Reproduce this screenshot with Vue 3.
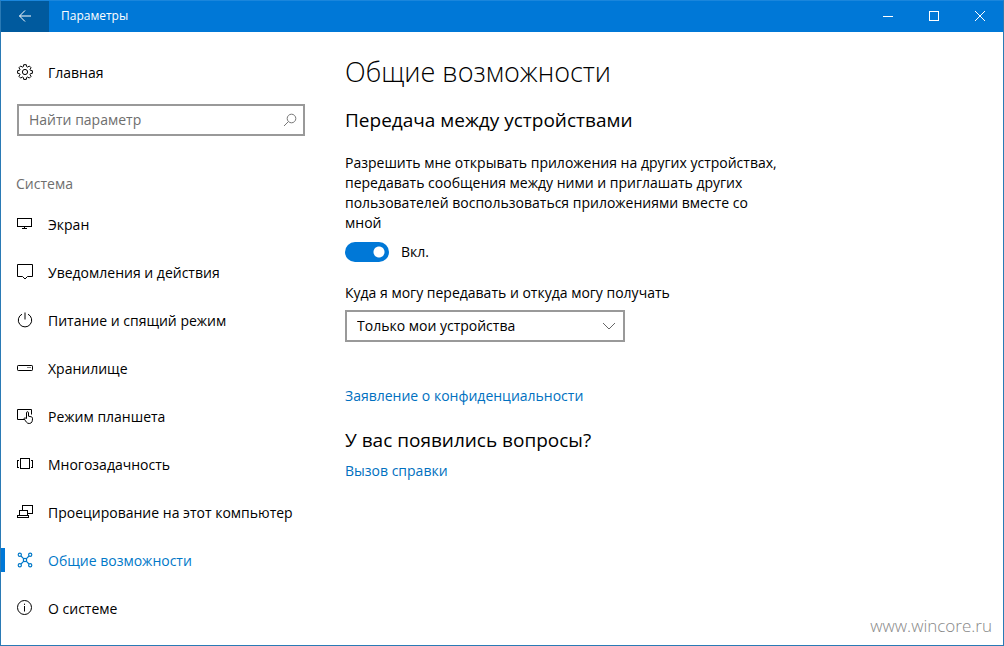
<script setup>
import { ref } from 'vue'

const query = ref('')
const shared = ref(true)
const source = ref('mine')
const active = ref('shared')

const items = [
  { id: 'display', label: 'Экран' },
  { id: 'notifications', label: 'Уведомления и действия' },
  { id: 'power', label: 'Питание и спящий режим' },
  { id: 'storage', label: 'Хранилище' },
  { id: 'tablet', label: 'Режим планшета' },
  { id: 'multitasking', label: 'Многозадачность' },
  { id: 'projecting', label: 'Проецирование на этот компьютер' },
  { id: 'shared', label: 'Общие возможности' },
  { id: 'about', label: 'О системе' },
]
</script>

<template>
  <div class="window">
    <header class="titlebar">
      <button class="back" type="button" aria-label="Назад">
        <svg width="14" height="14" viewBox="0 0 14 14"><path d="M13 7H1.500M7 1.500 1.500 7 7 12.500" /></svg>
      </button>
      <span class="caption">Параметры</span>
      <button class="control" type="button" aria-label="Свернуть">
        <svg width="12" height="12" viewBox="0 0 12 12" shape-rendering="crispEdges"><path d="M1 6.500H11" /></svg>
      </button>
      <button class="control" type="button" aria-label="Развернуть">
        <svg width="12" height="12" viewBox="0 0 12 12" shape-rendering="crispEdges"><path d="M1.500 1.500h9v9h-9z" /></svg>
      </button>
      <button class="control" type="button" aria-label="Закрыть">
        <svg width="12" height="12" viewBox="0 0 12 12"><path d="m1 1 10 10M11 1 1 11" /></svg>
      </button>
    </header>

    <div class="body">
      <aside class="sidebar">
        <a class="entry" href="#home">
          <svg class="icon" viewBox="0 0 16 16">
            <path d="M6.700.7h2.600l.3 1.900 1.100.5 1.600-1.100 1.800 1.800L13 5.300l.5 1.100 1.900.3v2.600l-1.900.3-.5 1.100 1.100 1.600-1.800 1.800-1.600-1.100-1.100.5-.3 1.900H6.700l-.3-1.900-1.100-.5-1.600 1.100-1.800-1.800L3 10.700l-.5-1.100-1.900-.3V6.700l1.900-.3L3 5.300 1.900 3.800 3.700 2l1.600 1.100 1.100-.5z" />
            <circle cx="8" cy="8" r="2.600" />
          </svg>
          <span>Главная</span>
        </a>

        <form class="search" role="search" @submit.prevent>
          <input v-model="query" type="text" placeholder="Найти параметр" aria-label="Найти параметр" />
          <button type="submit" aria-label="Поиск">
            <svg width="14" height="14" viewBox="0 0 14 14"><circle cx="8.500" cy="5.500" r="4.300" /><path d="M5.400 8.600 1 13" /></svg>
          </button>
        </form>

        <h2 class="group">Система</h2>
        <nav>
          <a
            v-for="item in items"
            :key="item.id"
            class="entry"
            :class="{ active: active === item.id }"
            :href="'#' + item.id"
            @click="active = item.id"
          >
            <svg class="icon" viewBox="0 0 16 16">
              <g v-if="item.id === 'display'" shape-rendering="crispEdges">
                <path d="M.5 2.500h14v8H.5zM7.500 10.500v2M5 12.500h5" />
              </g>
              <path v-else-if="item.id === 'notifications'" d="M.5 .500h15v12h-5L8 15l-2.500-2.500H.5z" />
              <path v-else-if="item.id === 'power'" d="M5 2.200a6.700 6.700 0 1 0 6 0M8 .500v7" />
              <g v-else-if="item.id === 'storage'">
                <rect x=".5" y="5.500" width="15" height="5" rx=".7" />
                <path d="M10.500 7.500h1M12.500 7.500h1" />
              </g>
              <g v-else-if="item.id === 'tablet'">
                <path d="M7.500 11.500H.5v-10h14v5" />
                <path d="M9.500 10.500V4.800c0-1.500 2-1.500 2 0v3.400l2.800.6c.8.2 1.200.7 1.200 1.400 0 2.700-.4 5.300-3.300 5.300-2.400 0-3-1.700-4.900-4.500-.5-.9.400-1.600 1.200-.9z" />
              </g>
              <g v-else-if="item.id === 'multitasking'" shape-rendering="crispEdges">
                <path d="M3.500 2.500h9v10h-9zM2 4.500H.5v7H2M14 4.500h1.500v7H14" />
              </g>
              <g v-else-if="item.id === 'projecting'" shape-rendering="crispEdges">
                <path d="M5.500 6V1.500h10v8H11M2.500 11V6.500h8V11M.5 11.500h11v2H.5z" />
              </g>
              <g v-else-if="item.id === 'shared'" stroke-width="1.200">
                <circle cx="8" cy="8" r="1.700" />
                <circle cx="2.800" cy="2.800" r="1.600" />
                <circle cx="13.200" cy="2.800" r="1.600" />
                <circle cx="2.800" cy="13.200" r="1.600" />
                <circle cx="13.200" cy="13.200" r="1.600" />
                <path d="m4 4 2.800 2.800M12 4 9.200 6.800M4 12l2.800-2.800M12 12 9.200 9.200" />
              </g>
              <g v-else>
                <circle cx="7.500" cy="7.500" r="7" />
                <path d="M7.500 6v5.500M7.500 3.700v1.200" />
              </g>
            </svg>
            <span>{{ item.label }}</span>
          </a>
        </nav>
      </aside>

      <main class="content">
        <h1>Общие возможности</h1>
        <h2>Передача между устройствами</h2>
        <p id="share-text">
          Разрешить мне открывать приложения на других устройствах, передавать сообщения между ними и
          приглашать других пользователей воспользоваться приложениями вместе со мной
        </p>
        <label class="toggle">
          <input v-model="shared" type="checkbox" role="switch" aria-describedby="share-text" />
          <span>{{ shared ? 'Вкл.' : 'Откл.' }}</span>
        </label>

        <label class="field-label" for="source">Куда я могу передавать и откуда могу получать</label>
        <div class="select">
          <select id="source" v-model="source">
            <option value="mine">Только мои устройства</option>
            <option value="all">Все устройства поблизости</option>
          </select>
          <svg width="14" height="8" viewBox="0 0 14 8"><path d="m1 1 6 6 6-6" /></svg>
        </div>

        <a class="link privacy" href="#privacy">Заявление о конфиденциальности</a>
        <h2 class="questions">У вас появились вопросы?</h2>
        <a class="link" href="#help">Вызов справки</a>
      </main>
    </div>

    <span class="watermark">www.wincore.ru</span>
  </div>
</template>

<style>
body {
  margin: 0;
  background: #fff;
}
</style>

<style scoped>
* {
  box-sizing: border-box;
}

.window {
  position: relative;
  min-height: 100vh;
  border: 1px solid #2a7ab5;
  border-top-color: #1a86dc;
  background: #fff;
  color: #000;
  font-family: "Open Sans", "Noto Sans", sans-serif;
  font-size: 14px;
  line-height: 20px;
}

svg {
  display: block;
  flex: none;
  fill: none;
  stroke: currentColor;
}

button {
  display: flex;
  align-items: center;
  justify-content: center;
  padding: 0;
  border: 0;
  background: none;
  color: inherit;
}

a {
  color: inherit;
  text-decoration: none;
}

h1,
h2,
p {
  margin: 0;
}

.titlebar {
  display: flex;
  height: 31px;
  background: #0078d7;
  color: #fff;
  font-size: 12px;
  line-height: 30px;
}

.back {
  width: 48px;
  padding-bottom: 1px;
  background: #005a9e;
}

.caption {
  flex: 1;
  padding-left: 12px;
}

.control {
  width: 46px;
  padding-bottom: 1px;
}

.body {
  display: flex;
}

.sidebar {
  flex: none;
  width: 304px;
  padding-top: 16px;
}

.entry {
  display: flex;
  align-items: center;
  gap: 15px;
  height: 48px;
  padding-left: 16px;
  white-space: nowrap;
}

.entry span {
  padding-top: 2px;
}

.icon {
  width: 16px;
  height: 16px;
}

.entry.active {
  color: #0078c8;
  background: linear-gradient(#0078d7, #0078d7) left center / 4px 24px no-repeat;
}

.search {
  display: flex;
  height: 32px;
  margin: 8px 0 0 16px;
  border: 2px solid #999;
}

.search input {
  flex: 1;
  min-width: 0;
  padding: 0 0 0 10px;
  border: 0;
  outline: 0;
  background: none;
  font: inherit;
}

.search input::placeholder {
  color: #6e6e6e;
  opacity: 1;
}

.search button {
  width: 26px;
  color: #777;
}

.group {
  margin: 38px 0 6px 15px;
  color: #6e6e6e;
  font-size: 14px;
  font-weight: 400;
  line-height: 20px;
}

.content {
  flex: 1;
  min-width: 0;
  padding: 20px 24px 0 40px;
}

.content h1 {
  font-size: 27px;
  font-weight: 300;
  line-height: 40px;
}

.content h2 {
  margin-top: 14px;
  font-size: 19px;
  font-weight: 400;
  line-height: 28px;
}

.content p {
  max-width: 440px;
  margin-top: 19px;
}

.toggle {
  display: flex;
  align-items: center;
  gap: 12px;
  width: max-content;
  margin-top: 9px;
}

.toggle input {
  appearance: none;
  width: 44px;
  height: 20px;
  margin: 0;
  border-radius: 10px;
  background: radial-gradient(circle at 34px 10px, #fff 5px, transparent 6px) #0078d7;
}

.toggle input:not(:checked) {
  background: radial-gradient(circle at 10px 10px, #fff 5px, transparent 6px) #777;
}

.field-label {
  display: block;
  margin-top: 21px;
}

.select {
  display: grid;
  align-items: center;
  width: 280px;
  height: 32px;
  margin-top: 7px;
}

.select select {
  grid-area: 1 / 1;
  appearance: none;
  width: 100%;
  height: 100%;
  padding: 0 32px 0 10px;
  border: 2px solid #999;
  border-radius: 0;
  background: #fff;
  color: inherit;
  font: inherit;
}

.select svg {
  grid-area: 1 / 1;
  justify-self: end;
  margin-right: 9px;
  color: #666;
  pointer-events: none;
}

.link {
  display: block;
  width: max-content;
  color: #0070c0;
}

.privacy {
  margin-top: 44px;
}

.content .questions {
  margin-top: 20px;
  margin-bottom: 7px;
}

.watermark {
  position: absolute;
  right: 11px;
  bottom: 9px;
  color: #888;
  font-size: 17px;
  font-weight: 300;
}
</style>
